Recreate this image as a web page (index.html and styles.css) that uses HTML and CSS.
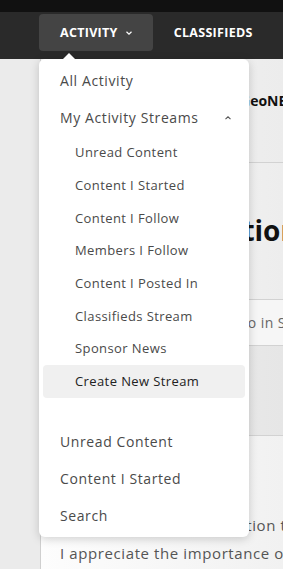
FILE: index.html
```html
<!DOCTYPE html>
<html lang="en">
<head>
    <meta charset="UTF-8">
    <meta name="viewport" content="width=device-width, initial-scale=1.0">
    <title>Activity</title>
    <link rel="stylesheet" href="styles.css">
</head>
<body>
    <div class="top-strip"></div>
    <div class="nav">
        <div class="nav-item active">Activity
            <svg width="8" height="6" viewBox="0 0 8 6"><path d="M1.5 1.8 L4 4.2 L6.5 1.8" fill="none" stroke="#fff" stroke-width="1.2"/></svg>
        </div>
        <div class="nav-item">Classifieds</div>
    </div>

    <div class="page">
        <div class="panel">
            <div class="sec head"><span class="brand">GeoNE</span></div>
            <div class="sec title"><h1>Introduction</h1></div>
            <div class="sec meta">Geo in S</div>
            <div class="sec blank"></div>
            <div class="sec post">
                <p class="line1">Introduction to</p>
                <p>I appreciate the importance o</p>
            </div>
        </div>

        <div class="menu">
            <span class="tip"></span>
            <a class="m-item">All Activity</a>
            <a class="m-item">My Activity Streams
                <svg class="up" width="8" height="6" viewBox="0 0 8 6"><path d="M1.5 4.2 L4 1.8 L6.5 4.2" fill="none" stroke="#555" stroke-width="1.1"/></svg>
            </a>
            <div class="sub">
                <a class="s-item">Unread Content</a>
                <a class="s-item">Content I Started</a>
                <a class="s-item">Content I Follow</a>
                <a class="s-item">Members I Follow</a>
                <a class="s-item">Content I Posted In</a>
                <a class="s-item">Classifieds Stream</a>
                <a class="s-item">Sponsor News</a>
                <a class="s-item sel">Create New Stream</a>
            </div>
            <a class="m-item">Unread Content</a>
            <a class="m-item">Content I Started</a>
            <a class="m-item">Search</a>
        </div>
    </div>
</body>
</html>
```

FILE: styles.css
```css
body{
    margin:0;
    font-family:"Open Sans","Noto Sans",sans-serif;
    background:#ebebeb;
    overflow:hidden;
}
.top-strip{
    height:12px;
    background:#111;
}
.nav{
    height:47px;
    background:#2a2a2a;
    display:flex;
    align-items:flex-start;
    padding-left:39px;
}
.nav-item{
    height:37px;
    margin-top:2px;
    padding:0 20px 0 21px;
    display:flex;
    align-items:center;
    gap:7px;
    color:#fff;
    font-weight:700;
    font-size:12.5px;
    letter-spacing:.3px;
    text-transform:uppercase;
    border-radius:4px;
}
.nav-item.active{
    background:#444;
}
.page{
    position:relative;
}
.panel{
    margin-left:40px;
    border-left:1px solid #cfcfcf;
    background:#f3f3f3;
}
.sec{
    border-bottom:1px solid #d2d2d2;
    overflow:hidden;
    white-space:nowrap;
}
.head{
    height:103px;
    background:linear-gradient(90deg,#f7f7f7,#ececec);
}
.brand{
    display:block;
    margin:32px 0 0 199px;
    font-weight:700;
    font-size:14px;
    color:#111;
}
.title{
    height:136px;
    background:linear-gradient(90deg,#fafafa,#ededed);
}
.title h1{
    margin:48px 0 0 81px;
    font-size:28px;
    color:#111;
}
.meta{
    height:45px;
    line-height:45px;
    padding-left:188px;
    font-size:14px;
    letter-spacing:.4px;
    color:#666;
    background:#f6f6f6;
}
.blank{
    height:89px;
    background:linear-gradient(90deg,#f2f2f2,#e6e6e6);
}
.post{
    height:200px;
    background:linear-gradient(90deg,#fdfdfd,#f1f1f1);
    border:0;
    padding-left:19px;
    font-size:15px;
    letter-spacing:.6px;
    color:#555;
}
.post p{
    margin:0;
    line-height:28px;
}
.post .line1{
    margin-top:75px;
    padding-left:122px;
}
.menu{
    position:absolute;
    left:39px;
    top:0;
    width:210px;
    height:478px;
    background:#fff;
    border-radius:6px;
    box-shadow:0 2px 10px rgba(0,0,0,.18);
    box-sizing:border-box;
    padding-top:3px;
}
.tip{
    position:absolute;
    left:24px;
    top:-6px;
    border:6px solid transparent;
    border-top:0;
    border-bottom-color:#fff;
}
.m-item{
    display:flex;
    align-items:center;
    justify-content:space-between;
    height:37px;
    padding:0 21px;
    font-size:14px;
    letter-spacing:.6px;
    color:#4a4a4a;
}
.up{
    margin-right:-4px;
}
.sub{
    padding:0 4px 25px;
}
.s-item{
    display:flex;
    align-items:center;
    height:32.7px;
    padding-left:32px;
    font-size:13px;
    letter-spacing:.4px;
    color:#4a4a4a;
    border-radius:4px;
}
.s-item.sel{
    background:#f0f0f0;
    color:#222;
}
```
